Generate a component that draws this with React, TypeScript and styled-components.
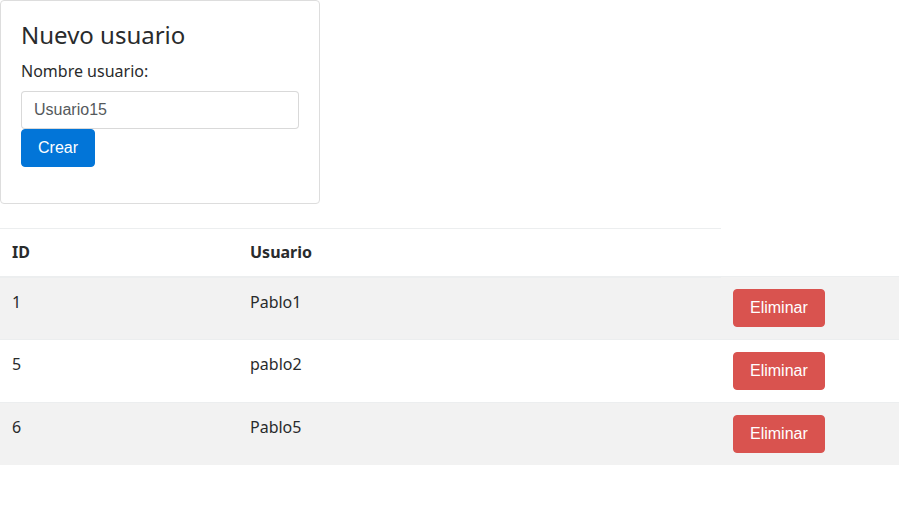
import styled, { createGlobalStyle } from "styled-components";

const GlobalStyle = createGlobalStyle`
  body {
    margin: 0;
    font-family: "Noto Sans", "Open Sans", sans-serif;
    font-size: 16px;
    line-height: 1.5;
    color: #292b2c;
    background: #ffffff;
  }
  * {
    box-sizing: border-box;
  }
`;

interface User {
  id: number;
  name: string;
}

const users: User[] = [
  { id: 1, name: "Pablo1" },
  { id: 5, name: "pablo2" },
  { id: 6, name: "Pablo5" }
];

const Card = styled.div`
  width: 320px;
  border: 1px solid #dddddd;
  border-radius: 4px;
  padding: 20px;
`;

const Title = styled.h3`
  margin: 0 0 9px 0;
  font-size: 24px;
  font-weight: 400;
  line-height: 1.2;
`;

const Form = styled.form`
  display: flex;
  flex-direction: column;
  align-items: flex-start;
  margin-bottom: 16px;
`;

const Label = styled.label`
  display: block;
  margin-bottom: 8px;
`;

const Input = styled.input`
  display: block;
  width: 100%;
  height: 38px;
  padding: 8px 12px;
  font: 16px/1.25 "Liberation Sans", Arial, sans-serif;
  color: #55595c;
  border: 1px solid rgba(0, 0, 0, 0.15);
  border-radius: 4px;
  outline: none;
`;

const Button = styled.button<{ $tone: "primary" | "danger" }>`
  display: inline-block;
  height: 38px;
  padding: 8px 16px;
  font: 16px/1.25 "Liberation Sans", Arial, sans-serif;
  color: #ffffff;
  background: ${(p) => (p.$tone === "primary" ? "#0275d8" : "#d9534f")};
  border: 1px solid ${(p) => (p.$tone === "primary" ? "#0275d8" : "#d9534f")};
  border-radius: 4px;
  cursor: pointer;
`;

const Table = styled.table`
  width: 100%;
  margin-top: 24px;
  border-collapse: collapse;
`;

const Head = styled.th`
  padding: 11px 12px 12px 12px;
  text-align: left;
  font-weight: 700;
  border-top: 1px solid #eceeef;
  border-bottom: 2px solid #eceeef;
  vertical-align: top;
`;

const Row = styled.tr`
  &:nth-child(odd) {
    background: #f2f2f2;
  }
`;

const Cell = styled.td<{ $width?: number }>`
  width: ${(p) => (p.$width ? `${p.$width}px` : "auto")};
  padding: 12px;
  border-top: 1px solid #eceeef;
  vertical-align: top;
`;

const App = () => {
  return (
    <>
      <GlobalStyle />
      <Card>
        <Title>Nuevo usuario</Title>
        <Form onSubmit={(e) => e.preventDefault()}>
          <Label htmlFor="nombre">Nombre usuario:</Label>
          <Input id="nombre" defaultValue="Usuario15" />
          <Button $tone="primary" type="submit">
            Crear
          </Button>
        </Form>
      </Card>
      <Table>
        <thead>
          <tr>
            <Head>ID</Head>
            <Head>Usuario</Head>
          </tr>
        </thead>
        <tbody>
          {users.map((u) => (
            <Row key={u.id}>
              <Cell $width={238}>{u.id}</Cell>
              <Cell $width={483}>{u.name}</Cell>
              <Cell>
                <Button $tone="danger" type="button">
                  Eliminar
                </Button>
              </Cell>
            </Row>
          ))}
        </tbody>
      </Table>
    </>
  );
};

export default App;
